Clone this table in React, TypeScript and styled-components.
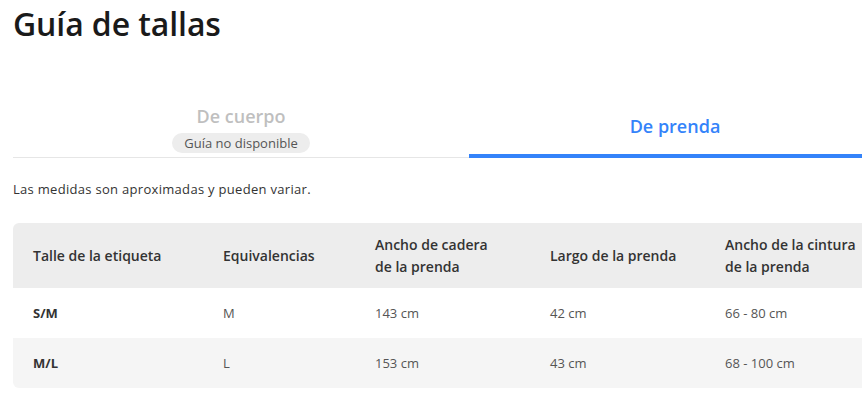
import React from 'react';
import styled, { createGlobalStyle } from 'styled-components';

const GlobalStyle = createGlobalStyle`
    html, body {
        margin: 0;
        padding: 0;
        background: #fff;
        overflow: hidden;
    }
    body {
        font-family: 'Open Sans', 'Liberation Sans', sans-serif;
        color: #333;
    }
`;

const Page = styled.main`
    width: 912px;
    padding: 4px 0 0 13px;
`;

const Title = styled.h1`
    margin: 0;
    font-size: 32px;
    line-height: 40px;
    font-weight: 600;
    color: #1a1a1a;
    letter-spacing: -0.1px;
`;

const Tabs = styled.nav`
    display: flex;
    margin-top: 54px;
    border-bottom: 1px solid #e6e6e6;
`;

const Tab = styled.div<{ $active?: boolean; $width: number }>`
    width: ${(p) => p.$width}px;
    height: 60px;
    display: flex;
    flex-direction: column;
    align-items: center;
    justify-content: ${(p) => (p.$active ? 'center' : 'flex-start')};
    box-sizing: border-box;
    padding-top: ${(p) => (p.$active ? '0' : '6px')};
    border-bottom: 4px solid ${(p) => (p.$active ? '#3483fa' : 'transparent')};
    margin-bottom: -1px;
`;

const TabLabel = styled.span<{ $active?: boolean }>`
    font-size: 18px;
    line-height: 24px;
    font-weight: 600;
    color: ${(p) => (p.$active ? '#3483fa' : '#bfbfbf')};
`;

const Badge = styled.span`
    margin-top: 5px;
    padding: 0 12px;
    height: 20px;
    line-height: 20px;
    border-radius: 10px;
    background: #ededed;
    font-size: 13px;
    color: #555;
`;

const Note = styled.p`
    margin: 22px 0 0;
    font-size: 13px;
    line-height: 18px;
    letter-spacing: 0.3px;
    color: #333;
`;

const Table = styled.table`
    margin-top: 25px;
    width: 880px;
    border-collapse: separate;
    border-spacing: 0;
    border-radius: 6px;
    overflow: hidden;
    table-layout: fixed;
`;

const HeadRow = styled.tr`
    background: #ededed;
    height: 65px;
`;

const HeadCell = styled.th<{ $width?: number }>`
    width: ${(p) => (p.$width ? `${p.$width}px` : 'auto')};
    padding: 0 20px;
    text-align: left;
    font-size: 14px;
    line-height: 22px;
    font-weight: 600;
    color: #333;
`;

const HeadLabel = styled.span`
    display: block;
    max-width: 131px;
`;

const BodyRow = styled.tr<{ $striped?: boolean }>`
    height: 50px;
    background: ${(p) => (p.$striped ? '#f5f5f5' : '#fff')};
`;

const Cell = styled.td<{ $strong?: boolean }>`
    padding: 0 20px;
    font-size: 13px;
    font-weight: ${(p) => (p.$strong ? 700 : 400)};
    color: ${(p) => (p.$strong ? '#333' : '#555')};
`;

// widths are content widths (cell padding comes on top)
const columns = [
    { label: 'Talle de la etiqueta', width: 150 },
    { label: 'Equivalencias', width: 112 },
    { label: 'Ancho de cadera de la prenda', width: 135 },
    { label: 'Largo de la prenda', width: 135 },
    { label: 'Ancho de la cintura de la prenda' },
];

const rows = [
    ['S/M', 'M', '143 cm', '42 cm', '66 - 80 cm'],
    ['M/L', 'L', '153 cm', '43 cm', '68 - 100 cm'],
];

function App() {
    return (
        <>
            <GlobalStyle />
            <Page>
                <Title>Guía de tallas</Title>
                <Tabs>
                    <Tab $width={456}>
                        <TabLabel>De cuerpo</TabLabel>
                        <Badge>Guía no disponible</Badge>
                    </Tab>
                    <Tab $active $width={412}>
                        <TabLabel $active>De prenda</TabLabel>
                    </Tab>
                </Tabs>
                <Note>Las medidas son aproximadas y pueden variar.</Note>
                <Table>
                    <thead>
                        <HeadRow>
                            {columns.map((c) => (
                                <HeadCell key={c.label} $width={c.width}>
                                    <HeadLabel>{c.label}</HeadLabel>
                                </HeadCell>
                            ))}
                        </HeadRow>
                    </thead>
                    <tbody>
                        {rows.map((r, i) => (
                            <BodyRow key={r[0]} $striped={i % 2 === 1}>
                                {r.map((v, j) => (
                                    <Cell key={j} $strong={j === 0}>
                                        {v}
                                    </Cell>
                                ))}
                            </BodyRow>
                        ))}
                    </tbody>
                </Table>
            </Page>
        </>
    );
}

export default App;
